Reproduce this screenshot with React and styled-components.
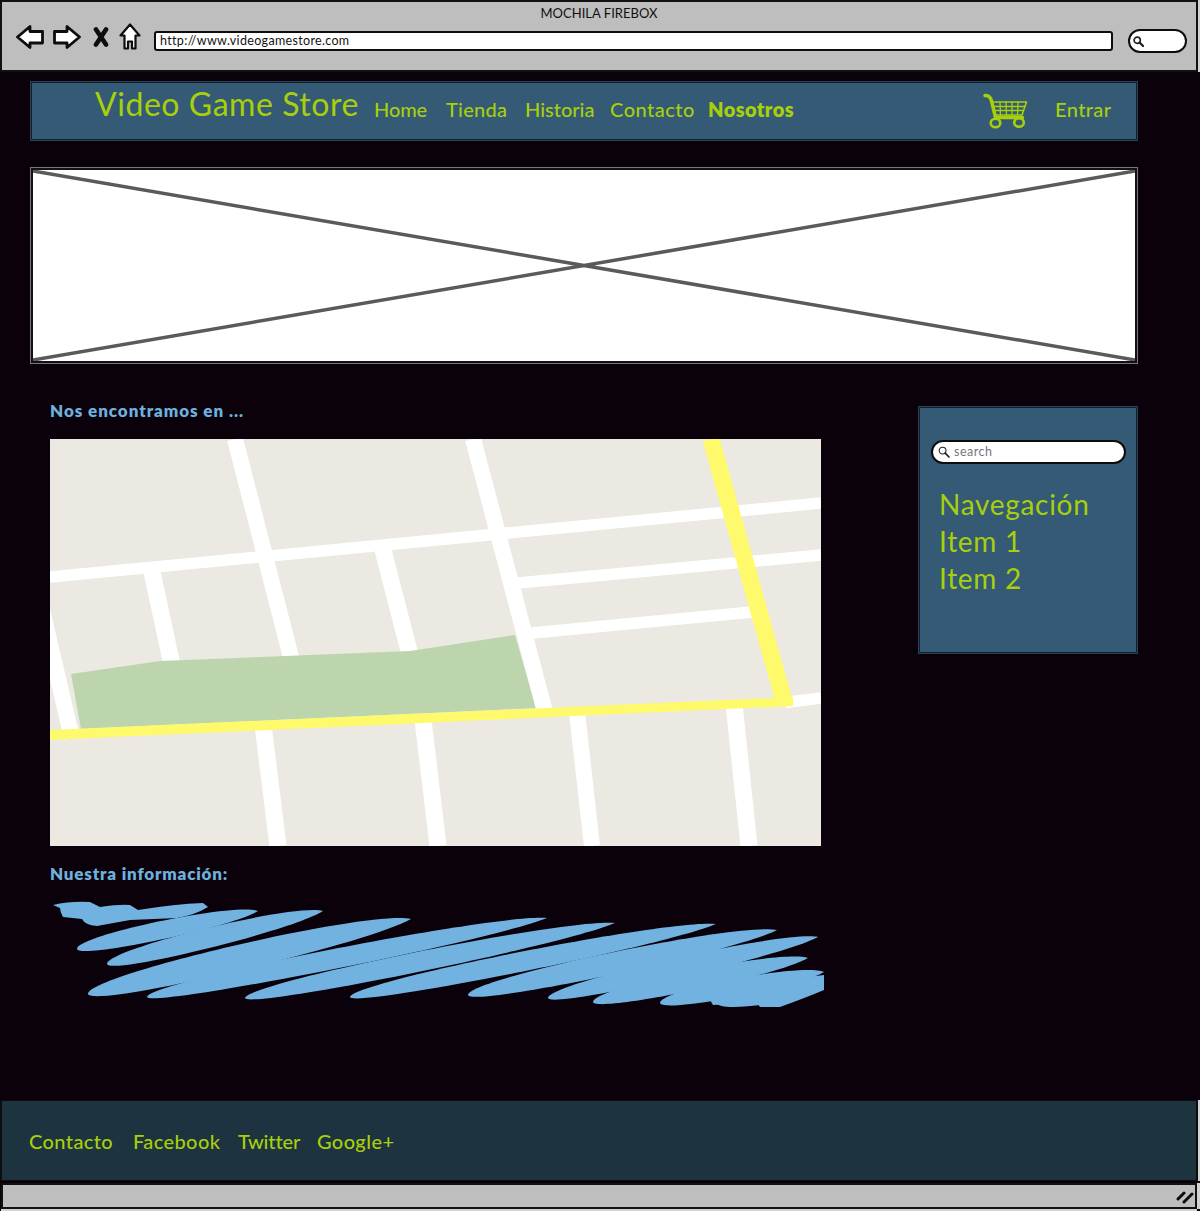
import React from "react";
import styled, { createGlobalStyle } from "styled-components";

const FONT = `"Lato", "Noto Sans", "Liberation Sans", sans-serif`;
const GREEN = "#a8cf0b";
const BLUE = "#6fb0dd";
const EDGE = "#d2d2d2";

const Global = createGlobalStyle`
  html, body { margin: 0; padding: 0; background: #0b010b; }
  * { box-sizing: border-box; }
`;

const Window = styled.div`
  width: 1200px;
  height: 1211px;
  display: flex;
  flex-direction: column;
  background: #0b010b;
  font-family: ${FONT};
`;

const BrowserBar = styled.header`
  width: 1198px;
  height: 72px;
  background: #bebebe;
  border: 2px solid #111;
  box-shadow: 2px 0 0 ${EDGE};
  flex: none;
`;

const WindowTitle = styled.div`
  height: 24px;
  text-align: center;
  font-size: 13px;
  line-height: 22px;
  letter-spacing: 0.02px;
  color: #111;
`;

const BrowserRow = styled.div`
  display: flex;
  align-items: center;
  height: 30px;
  padding-left: 14px;
`;

const ChromeIcon = styled.svg`
  flex: none;
  display: block;
  margin-left: ${(p) => p.$gap || 0}px;
  margin-bottom: 9px;
`;

const AddressBar = styled.div`
  width: 959px;
  height: 20px;
  margin-left: 13px;
  flex: none;
  background: #fff;
  border: 2px solid #0d0d0d;
  border-radius: 3px;
  padding-left: 4px;
  font-size: 12.5px;
  line-height: 16px;
  letter-spacing: 0.33px;
  color: #111;
`;

const MiniSearch = styled.div`
  width: 59px;
  height: 24px;
  margin-left: 15px;
  flex: none;
  background: #fff;
  border: 2px solid #0d0d0d;
  border-radius: 12px;
  display: flex;
  align-items: center;
  padding-left: 3px;
`;

const Content = styled.main`
  flex: 1;
  padding: 10px 63px 0 31px;
`;

const TopPanel = styled.nav`
  height: 58px;
  background: #345a75;
  border: 1px solid #12202b;
  box-shadow: 0 0 0 1px #2c4353;
  display: flex;
  align-items: center;
  padding-left: 63px;
`;

const Brand = styled.div`
  font-size: 32px;
  line-height: 46px;
  height: 46px;
  margin-top: -14px;
  color: ${GREEN};
  letter-spacing: 0.55px;
  width: 279px;
  white-space: nowrap;
`;

const NavLink = styled.a`
  font-size: 20px;
  color: ${GREEN};
  font-weight: ${(p) => (p.$active ? 800 : 500)};
  width: ${(p) => p.$w}px;
  letter-spacing: ${(p) => p.$ls ?? 0.4}px;
  white-space: nowrap;
  flex: none;
`;

const TopLink = styled(NavLink)`
  margin-bottom: 5px;
`;

const Cart = styled.svg`
  display: block;
  flex: none;
  margin-left: 188px;
`;

const EnterLink = styled(TopLink)`
  margin-left: 27px;
`;

const Hero = styled.div`
  height: 195px;
  margin-top: 28px;
  background: #fff;
  border: 2px solid #111;
  box-shadow: 0 0 0 1px #777;
`;

const HeroCross = styled.svg`
  display: block;
  width: 100%;
  height: 100%;
`;

const Columns = styled.section`
  display: flex;
  justify-content: space-between;
  margin-top: 39px;
  padding-left: 19px;
`;

const LeftColumn = styled.div`
  width: 776px;
`;

const SectionTitle = styled.h2`
  margin: ${(p) => p.$top}px 0 ${(p) => p.$bottom}px;
  height: 18px;
  font-size: 17px;
  line-height: 18px;
  font-weight: 800;
  letter-spacing: ${(p) => p.$ls}px;
  color: ${BLUE};
`;

const MapArt = styled.svg`
  display: block;
  width: 771px;
  height: 407px;
`;

const Scribble = styled.svg`
  display: block;
  width: 776px;
  height: 110px;
`;

const SideBox = styled.aside`
  width: 218px;
  height: 246px;
  margin-top: 5px;
  background: #345a75;
  border: 1px solid #12202b;
  box-shadow: 0 0 0 1px #2c4353;
  padding: 32px 10px 0 11px;
`;

const SideSearch = styled.div`
  width: 195px;
  height: 24px;
  background: #fff;
  border: 2px solid #0d0d0d;
  border-radius: 12px;
  display: flex;
  align-items: center;
  gap: 4px;
  padding-left: 5px;
  font-size: 12.5px;
  line-height: 17px;
  letter-spacing: 0.5px;
  color: #77777f;
`;

const SearchHint = styled.span`
  margin-bottom: 2px;
`;

const SideList = styled.ul`
  list-style: none;
  margin: 22px 0 0 8px;
  padding: 0;
`;

const SideItem = styled.li`
  font-size: 28px;
  line-height: 37px;
  letter-spacing: 0.7px;
  color: ${GREEN};
`;

const Footer = styled.footer`
  width: 1198px;
  height: 81px;
  flex: none;
  background: #1d3340;
  border: 1px solid #0d0d0d;
  border-left-width: 2px;
  border-right-width: 2px;
  box-shadow: 2px 0 0 ${EDGE};
  display: flex;
  align-items: center;
  padding-left: 27px;
`;

const StatusBar = styled.div`
  width: 1196px;
  height: 26px;
  flex: none;
  margin: 2px 0 2px 1px;
  background: #bebebe;
  border: 2px solid #111;
  box-shadow: 3px 0 0 ${EDGE}, 0 2px 0 ${EDGE};
  display: flex;
  align-items: center;
  justify-content: flex-end;
  padding-right: 1px;
`;

const BackIcon = () => (
  <ChromeIcon width="28" height="24" viewBox="0 0 28 24" $gap={0}>
    <path d="M1.500 12 L14 1.500 V6.500 H26.500 V18 H14 V22.500 Z" fill="#fff" stroke="#0d0d0d" strokeWidth="2.800" strokeLinejoin="round" />
  </ChromeIcon>
);

const ForwardIcon = () => (
  <ChromeIcon width="28" height="24" viewBox="0 0 28 24" $gap={9}>
    <path d="M26.500 12 L14 1.500 V6.500 H1.500 V18 H14 V22.500 Z" fill="#fff" stroke="#0d0d0d" strokeWidth="2.800" strokeLinejoin="round" />
  </ChromeIcon>
);

const CloseIcon = () => (
  <ChromeIcon width="16" height="20" viewBox="0 0 16 20" $gap={12}>
    <path d="M3 2.500 L13 17.500 M13 2.500 L3 17.500" fill="none" stroke="#0d0d0d" strokeWidth="4.600" strokeLinecap="round" />
  </ChromeIcon>
);

const HomeIcon = () => (
  <ChromeIcon width="22" height="27" viewBox="0 0 22 27" $gap={10}>
    <path d="M11 1.500 L20.500 12.500 H16.500 V25.500 H13 V18.500 H9 V25.500 H5.500 V12.500 H1.500 Z" fill="#fff" stroke="#0d0d0d" strokeWidth="2.200" strokeLinejoin="round" />
  </ChromeIcon>
);

const Magnifier = ({ size = 12, weight = 1.4 }) => (
  <svg width={size} height={size} viewBox="0 0 12 12" style={{ flex: "none", display: "block" }}>
    <circle cx="4.600" cy="4.600" r="3.400" fill="none" stroke="#222" strokeWidth={weight} />
    <path d="M7.200 7.200 L11 11" stroke="#222" strokeWidth={weight + 0.6} strokeLinecap="round" />
  </svg>
);

const CartIcon = () => (
  <Cart width="46" height="37" viewBox="982 93 46 37">
    <g fill="none" stroke={GREEN} strokeLinecap="round" strokeLinejoin="round">
      <path d="M985 95.500 C989 95 990.500 97 991.500 101 L995.500 117.500 H1022.500" strokeWidth="3.400" />
      <path d="M992 102 H1026.500 L1022 115 H995 Z" strokeWidth="1.600" />
      <path d="M993.500 106.500 H1025 M994.500 110.500 H1023.500 M1000 102 L1000.500 115 M1006 102 L1006.500 115 M1012 102 L1012 115 M1018 102 L1017.500 115" strokeWidth="1.300" />
      <ellipse cx="995.500" cy="123" rx="4.800" ry="4.300" strokeWidth="2.600" />
      <ellipse cx="1019" cy="122.500" rx="4.800" ry="4.300" strokeWidth="2.600" />
    </g>
  </Cart>
);

const whiteRoads = [
  [50, 577, 821, 503, 11.5],
  [235, 439, 293, 665, 16],
  [152, 572, 172, 665, 17],
  [383, 550, 410, 655, 17],
  [42, 610, 72, 738, 16],
  [263, 725, 278, 846, 17],
  [423, 720, 438, 846, 17],
  [577, 712, 592, 846, 16],
  [734, 704, 749, 846, 17],
  [518, 583, 821, 555, 11.5],
  [532, 633, 752, 612, 11.5],
  [785, 702.5, 821, 698, 11.5],
];

const MapDrawing = () => (
  <MapArt viewBox="50 439 771 407">
    <rect x="50" y="439" width="771" height="407" fill="#ebe9e1" />
    {whiteRoads.map(([x1, y1, x2, y2, w]) => (
      <line key={`${x1}-${y1}`} x1={x1} y1={y1} x2={x2} y2={y2} stroke="#fff" strokeWidth={w} />
    ))}
    <polygon points="71,674 160,661 410,651 515,635 536,708 81,729" fill="#bdd5ac" />
    <line x1="473" y1="439" x2="545" y2="712" stroke="#fff" strokeWidth="16" />
    <line x1="711" y1="439" x2="784" y2="701" stroke="#fffa6c" strokeWidth="17" />
    <polygon points="50,730 793,697 793,706 50,740" fill="#fffa6c" />
  </MapArt>
);

const strokes = [
  [77, 949, 258, 911, 20],
  [107, 964, 323, 911, 22],
  [88, 994, 411, 919, 28],
  [147, 997, 547, 918, 22],
  [245, 998, 615, 923, 22],
  [350, 997, 716, 924, 22],
  [468, 995, 777, 930, 24],
  [548, 998, 818, 937, 22],
  [593, 1002, 808, 958, 22],
  [660, 1003, 824, 972, 20],
  [717, 1003, 824, 988, 20],
];

const lens = ([x1, y1, x2, y2, t]) => {
  const dx = x2 - x1;
  const dy = y2 - y1;
  const len = Math.hypot(dx, dy);
  const h = t * 0.667;
  const nx = (dy / len) * h;
  const ny = (-dx / len) * h;
  const pt = (a, s) => `${(x1 + dx * a + nx * s).toFixed(1)} ${(y1 + dy * a + ny * s).toFixed(1)}`;
  return `M${x1} ${y1} C${pt(0.01, 1)} ${pt(0.88, 1)} ${x2} ${y2} C${pt(0.85, -0.8)} ${pt(0, -0.8)} ${x1} ${y1} Z`;
};

const ScribbleDrawing = () => (
  <Scribble viewBox="50 900 776 110">
    <path d="M53 905 Q70 901 90 902 L100 907 Q120 904 130 905 L138 910 Q175 904 203 903 L208 907 Q195 915 177 918 L130 920 L97 926 Q85 925 82 919 L63 917 Q60 912 60 908 Z" fill="#72b2e0" />
    {strokes.map((s) => (
      <path key={`${s[0]}-${s[1]}`} d={lens(s)} fill="#72b2e0" />
    ))}
    <path d="M660 1003 L710 1000 L713 1005 L757 1003 L760 1007 L780 1007 Q805 998 824 990 L824 975 L700 990 Z" fill="#72b2e0" />
  </Scribble>
);

export default function App() {
  return (
    <Window>
      <Global />
      <BrowserBar>
        <WindowTitle>MOCHILA FIREBOX</WindowTitle>
        <BrowserRow>
          <BackIcon />
          <ForwardIcon />
          <CloseIcon />
          <HomeIcon />
          <AddressBar>http://www.videogamestore.com</AddressBar>
          <MiniSearch>
            <Magnifier size={11} weight={1.8} />
          </MiniSearch>
        </BrowserRow>
      </BrowserBar>
      <Content>
        <TopPanel>
          <Brand>Video Game Store</Brand>
          <TopLink $w={72} $ls={-0.1}>Home</TopLink>
          <TopLink $w={79} $ls={0.25}>Tienda</TopLink>
          <TopLink $w={85} $ls={0}>Historia</TopLink>
          <TopLink $w={98} $ls={0.5}>Contacto</TopLink>
          <TopLink $w={86} $active>Nosotros</TopLink>
          <CartIcon />
          <EnterLink $w={60}>Entrar</EnterLink>
        </TopPanel>
        <Hero>
          <HeroCross viewBox="0 0 1102 191" preserveAspectRatio="none">
            <path d="M0 1 L1102 190 M0 190 L1102 1" stroke="#5a5a5a" strokeWidth="3.5" fill="none" />
          </HeroCross>
        </Hero>
        <Columns>
          <LeftColumn>
            <SectionTitle $top={0} $bottom={19} $ls={0.94}>Nos encontramos en ...</SectionTitle>
            <MapDrawing />
            <SectionTitle $top={19} $bottom={17} $ls={0.82}>Nuestra información:</SectionTitle>
            <ScribbleDrawing />
          </LeftColumn>
          <SideBox>
            <SideSearch>
              <Magnifier size={12} weight={1.1} />
              <SearchHint>search</SearchHint>
            </SideSearch>
            <SideList>
              <SideItem>Navegación</SideItem>
              <SideItem>Item 1</SideItem>
              <SideItem>Item 2</SideItem>
            </SideList>
          </SideBox>
        </Columns>
      </Content>
      <Footer>
        <NavLink $w={104}>Contacto</NavLink>
        <NavLink $w={105}>Facebook</NavLink>
        <NavLink $w={79} $ls={-0.15}>Twitter</NavLink>
        <NavLink $w={80}>Google+</NavLink>
      </Footer>
      <StatusBar>
        <svg width="18" height="15" viewBox="0 0 18 15">
          <path d="M2 10 L8 4 M8 13 L16 5" stroke="#0d0d0d" strokeWidth="3" strokeLinecap="round" />
        </svg>
      </StatusBar>
    </Window>
  );
}
